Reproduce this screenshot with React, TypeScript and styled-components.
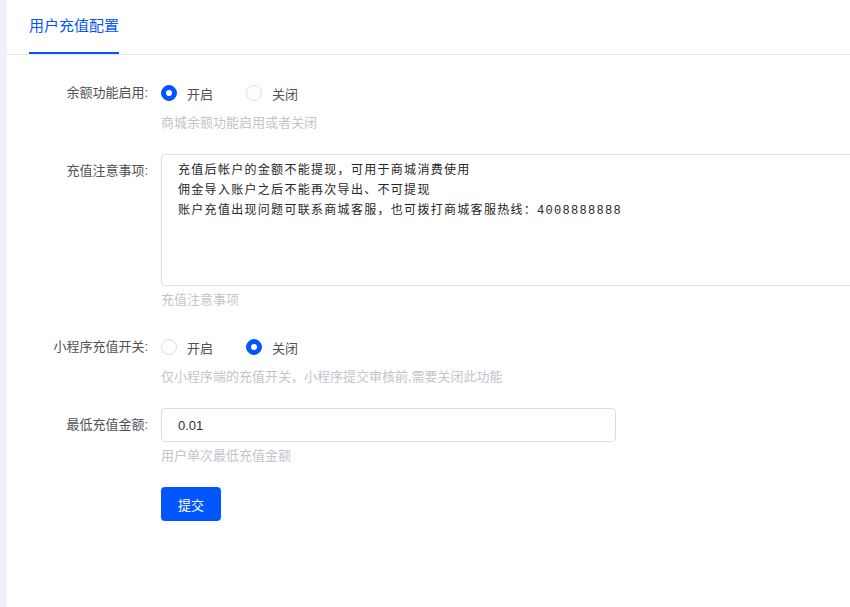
import React from "react";
import styled, { createGlobalStyle } from "styled-components";

const blue = "#0256ff";

const GlobalStyle = createGlobalStyle`
  html, body {
    margin: 0;
    padding: 0;
    background: #f0f1f6;
    font-family: "Liberation Sans", "Noto Sans CJK SC", sans-serif;
    overflow: hidden;
  }
`;

const Page = styled.div`
  display: flex;
  height: 607px;
  width: 850px;
  overflow: hidden;
`;

const Side = styled.div`
  width: 7px;
  flex: none;
  background: #f0f1f6;
`;

const Card = styled.main`
  flex: 1;
  min-width: 0;
  background: #fff;
`;

const TabBar = styled.div`
  display: flex;
  height: 54px;
  padding-left: 22px;
  border-bottom: 1px solid #e4e6ee;
`;

const Tab = styled.div<{ $active?: boolean }>`
  display: flex;
  align-items: center;
  height: 100%;
  box-sizing: border-box;
  padding-bottom: 4px;
  font-size: 15px;
  color: ${({ $active }) => ($active ? blue : "#303133")};
  border-bottom: 2px solid ${({ $active }) => ($active ? blue : "transparent")};
  margin-bottom: -1px;
`;

const Form = styled.form`
  padding-top: 22px;
`;

const Item = styled.div`
  display: flex;
  margin-bottom: 21px;
`;

const Label = styled.label<{ $tall?: boolean }>`
  width: 154px;
  flex: none;
  padding-right: 13px;
  box-sizing: border-box;
  text-align: right;
  font-size: 13px;
  line-height: ${({ $tall }) => ($tall ? "34px" : "32px")};
  color: #505255;
`;

const Control = styled.div`
  flex: 1;
  min-width: 0;
`;

const RadioGroup = styled.div`
  display: flex;
  align-items: center;
  height: 32px;
  gap: 33px;
`;

const RadioOption = styled.span`
  display: flex;
  align-items: center;
  gap: 10px;
  font-size: 13px;
  color: #505255;
`;

const RadioDot = styled.span<{ $checked?: boolean }>`
  width: 16px;
  height: 16px;
  box-sizing: border-box;
  border-radius: 50%;
  border: 1px solid ${({ $checked }) => ($checked ? blue : "#dcdfe6")};
  background: ${({ $checked }) => ($checked ? blue : "#fff")};
  display: flex;
  align-items: center;
  justify-content: center;

  &::after {
    content: "";
    width: 6px;
    height: 6px;
    border-radius: 50%;
    background: #fff;
    display: ${({ $checked }) => ($checked ? "block" : "none")};
  }
`;

const Help = styled.div`
  margin-top: 4px;
  font-size: 13px;
  line-height: 20px;
  color: #c2c5cc;
`;

const TextArea = styled.div`
  width: 740px;
  height: 132px;
  box-sizing: border-box;
  border: 1px solid #dcdee2;
  border-radius: 4px;
  padding: 6px 16px;
  font-family: "Liberation Mono", "Noto Sans CJK SC", monospace;
  font-size: 12px;
  line-height: 20px;
  letter-spacing: 1.3px;
  color: #262626;
  white-space: pre;
`;

const Input = styled.div`
  width: 455px;
  height: 34px;
  box-sizing: border-box;
  border: 1px solid #dcdee2;
  border-radius: 4px;
  padding: 0 16px;
  display: flex;
  align-items: center;
  font-size: 13px;
  color: #303133;
`;

const Button = styled.button`
  height: 34px;
  padding: 0 17px;
  border: none;
  border-radius: 4px;
  background: ${blue};
  color: #fff;
  font-family: inherit;
  font-size: 13px;
  cursor: pointer;
`;

const Radio = ({ checked, label }: { checked?: boolean; label: string }) => (
  <RadioOption>
    <RadioDot $checked={checked} />
    {label}
  </RadioOption>
);

const notes = [
  "充值后帐户的金额不能提现，可用于商城消费使用",
  "佣金导入账户之后不能再次导出、不可提现",
  "账户充值出现问题可联系商城客服，也可拨打商城客服热线：4008888888",
].join("\n");

export default function App() {
  return (
    <Page>
      <GlobalStyle />
      <Side />
      <Card>
        <TabBar>
          <Tab $active>用户充值配置</Tab>
        </TabBar>
        <Form onSubmit={(e) => e.preventDefault()}>
          <Item>
            <Label>余额功能启用:</Label>
            <Control>
              <RadioGroup>
                <Radio checked label="开启" />
                <Radio label="关闭" />
              </RadioGroup>
              <Help>商城余额功能启用或者关闭</Help>
            </Control>
          </Item>
          <Item>
            <Label $tall>充值注意事项:</Label>
            <Control>
              <TextArea>{notes}</TextArea>
              <Help>充值注意事项</Help>
            </Control>
          </Item>
          <Item>
            <Label>小程序充值开关:</Label>
            <Control>
              <RadioGroup>
                <Radio label="开启" />
                <Radio checked label="关闭" />
              </RadioGroup>
              <Help>仅小程序端的充值开关，小程序提交审核前,需要关闭此功能</Help>
            </Control>
          </Item>
          <Item>
            <Label $tall>最低充值金额:</Label>
            <Control>
              <Input>0.01</Input>
              <Help>用户单次最低充值金额</Help>
            </Control>
          </Item>
          <Item>
            <Label />
            <Control>
              <Button type="submit">提交</Button>
            </Control>
          </Item>
        </Form>
      </Card>
    </Page>
  );
}
